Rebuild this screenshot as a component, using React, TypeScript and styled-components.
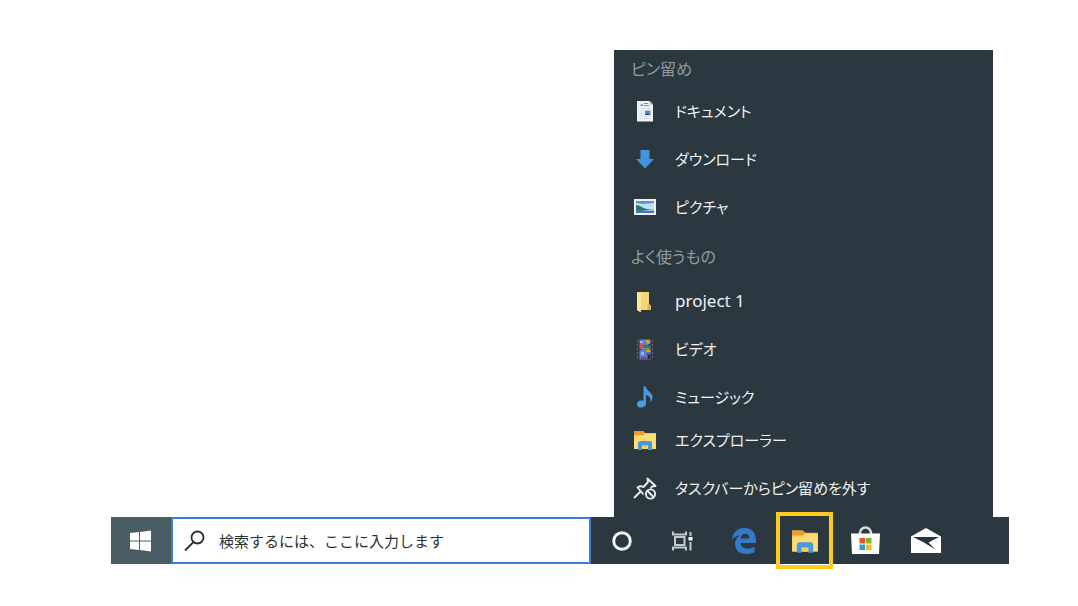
import React from 'react';
import styled, { createGlobalStyle } from 'styled-components';

const GlobalStyle = createGlobalStyle`
  * { box-sizing: border-box; }
  body {
    margin: 0;
    background: #fff;
    font-family: "Noto Sans", "Noto Sans CJK JP", sans-serif;
  }
  button, input { font: inherit; }
`;

const Desktop = styled.main`
  display: flex;
  flex-direction: column;
  padding: 50px 69px 40px 111px;
`;

const JumpList = styled.nav`
  align-self: flex-end;
  width: 379px;
  margin-right: 16px;
  padding: 7px 0 13px;
  background: #2b383f;
  font-feature-settings: "palt";
`;

const GroupTitle = styled.h2<{ $top?: number; $bottom: number }>`
  margin: ${p => p.$top ?? 0}px 0 ${p => p.$bottom}px 17px;
  font-size: 16px;
  font-weight: 400;
  line-height: 24px;
  color: #929ba0;
`;

const Group = styled.ul<{ $top?: number }>`
  display: flex;
  flex-direction: column;
  gap: 16px;
  margin: ${p => p.$top ?? 0}px 0 0;
  padding: 0;
  list-style: none;
`;

const Entry = styled.button<{ $latin?: boolean }>`
  display: flex;
  align-items: center;
  gap: 18px;
  width: 100%;
  height: 32px;
  padding: 0 0 0 19px;
  border: 0;
  background: transparent;
  color: #f0f2f3;
  font-size: ${p => (p.$latin ? 17 : 15)}px;
  font-feature-settings: "palt";
  line-height: 24px;
  text-align: left;
  white-space: nowrap;
  svg { flex: none; }
`;

const Taskbar = styled.footer`
  display: flex;
  height: 47px;
  background: #2b383f;
`;

const StartButton = styled.button`
  display: flex;
  align-items: center;
  justify-content: center;
  width: 60px;
  padding: 0;
  border: 0;
  background: #4b5d64;
`;

const SearchBox = styled.label`
  display: flex;
  flex: 1;
  align-items: center;
  gap: 12px;
  min-width: 0;
  padding-left: 11px;
  border: 2px solid #3c7ed0;
  background: #fff;
`;

const SearchInput = styled.input`
  flex: 1;
  min-width: 0;
  height: 32px;
  padding: 0;
  border: 0;
  outline: 0;
  background: transparent;
  font-size: 15px;
  color: #303030;
  &::placeholder { color: #303030; opacity: 1; }
`;

const Apps = styled.div`
  display: flex;
  padding-right: 52px;
`;

const AppButton = styled.button<{ $marked?: boolean }>`
  position: relative;
  display: flex;
  align-items: center;
  justify-content: center;
  width: 61px;
  padding: 0;
  border: 0;
  background: transparent;
  &::after {
    content: "";
    display: ${p => (p.$marked ? 'block' : 'none')};
    position: absolute;
    inset: -5px 2px;
    border: 4px solid #fbcb22;
  }
`;

const Icon = ({ size = 24, children }: { size?: number; children: React.ReactNode }) => (
  <svg width={size} height={size} viewBox="0 0 24 24" fill="none" aria-hidden="true">{children}</svg>
);

const DocumentIcon = () => (
  <Icon>
    <path d="M4 2h12.500L20 5.500V22.500H4z" fill="#f0f2f4" />
    <path d="M16.500 2v3.500H20z" fill="#b9c2c8" />
    <path d="M7 7l2-3 1 3zM11 4h4v1h-4zM11 6h5v1h-5z" fill="#3f9be0" />
    <path d="M6 9.500h12M6 12h5M6 14.500h5M6 17h12M6 19.500h12" stroke="#d3dfe9" />
    <path d="M12 11.500h5.500v4.500H12z" fill="#5d8fc2" />
    <path d="M12 16l2-2 3.500 2z" fill="#334c66" />
  </Icon>
);

const DownloadIcon = () => (
  <Icon><path d="M7.500 3h9v9H21l-9 9.500L3 12h4.500z" fill="#4294e0" /></Icon>
);

const PictureIcon = () => (
  <Icon>
    <path d="M1 4h22v16H1z" fill="#f2f1ee" />
    <path d="M3 6h18v12H3z" fill="#c3e3f5" />
    <path d="M3 6h18v2c-6 0-10 2-18 0z" fill="#5b91d7" />
    <path d="M3 10c4 0 6 3 11 4l7 1H3z" fill="#38725c" />
    <path d="M3 15h18v3H3z" fill="#3f79b4" />
    <path d="M9 16l12-2v2z" fill="#8fc3df" />
  </Icon>
);

const FolderIcon = () => (
  <Icon>
    <path d="M4 3h12v12l2 2v4H8l-1 2-3-2z" fill="#f6d478" />
    <path d="M4 3l4 2v18l-4-2z" fill="#ffe69b" />
    <path d="M14.500 15h1.500l2 2v4h-3.500z" fill="#dfb14c" />
  </Icon>
);

const VideoIcon = () => (
  <Icon>
    <path d="M3 2h18v21H3z" fill="#36393d" />
    <path d="M4.500 3v19M19.500 3v19" stroke="#62686d" strokeWidth="1" strokeDasharray="2 2" />
    <path d="M6.500 2.500h11v9h-11zM6.500 13h11v9.500h-11z" fill="#5a80d8" />
    <path d="M12 3h4l1.500 3-3 1zM13 13h4.500v2H14z" fill="#d9a72b" />
    <path d="M7 7h4v3H7z" fill="#dc4a51" />
    <path d="M11 8h6.500v3.500H9z" fill="#288356" />
    <path d="M13 16h4v3h-3zM8 20h5v2.500H8z" fill="#a83a46" />
    <path d="M7 4h3v2H7zM8 15h3v3H8z" fill="#93b7ee" />
    <path d="M15 18h2.500v4H14zM15 8l2.500-2v3z" fill="#293044" />
    <path d="M8 12h9" stroke="#e5b834" />
  </Icon>
);

const MusicIcon = () => (
  <Icon>
    <ellipse cx="8.500" cy="19" rx="4.500" ry="3.500" fill="#459be4" transform="rotate(-12 8.500 19)" />
    <path d="M10.500 1.500h2.300c.4 4.500 6.700 5.500 6.700 10.500 0 2.500-1 4-2 5 .2-4-1-6-4.500-7v9h-2.500z" fill="#459be4" />
  </Icon>
);

const ExplorerIcon = ({ size }: { size?: number }) => (
  <Icon size={size}>
    <path d="M1 3h9l2 2h11v16H1z" fill="#f3c84d" />
    <path d="M1 3h9l2 2-2 2H1z" fill="#e7a12b" />
    <path d="M1 8h9l2-2h11v15H1z" fill="#ffdc74" />
    <path d="M5 22v-7.500L6.500 13h11l1.500 1.500V22h-4v-4.500H9V22z" fill="#4699df" />
    <path d="M10 18h4v3h-4z" fill="#f6cc58" />
  </Icon>
);

const UnpinIcon = () => (
  <Icon>
    <g stroke="#e8ebed" strokeWidth="1.900" strokeLinejoin="round">
      <path d="M1 22l7.500-7.500M10.500 18.500L4.500 11.500c2-1.500 4-1.500 6-.5l4.500-5-.5-3.500 8 7.500-3.500.5-1.500 2" />
      <circle cx="17.500" cy="18" r="4.600" />
      <path d="M14.500 15l6 6" />
    </g>
  </Icon>
);

const WindowsIcon = () => (
  <svg width="22" height="22" viewBox="0 0 22 22" aria-hidden="true">
    <path fill="#fff" d="M0 3l9-1v8.500H0zM10 1.900L21 .5v10H10zM0 11.500h9V20l-9-1zM10 11.500h11v10L10 20.100z" />
  </svg>
);

const SearchIcon = () => (
  <svg width="23" height="22" viewBox="0 0 23 22" fill="none" stroke="#303030" strokeWidth="1.800" aria-hidden="true">
    <circle cx="13.500" cy="7.500" r="6" /><path d="M9.500 12L1 20.500" />
  </svg>
);

const CortanaIcon = () => (
  <Icon><circle cx="12" cy="12" r="8.300" stroke="#f2f4f5" strokeWidth="2.900" /></Icon>
);

const TaskViewIcon = () => (
  <Icon>
    <g stroke="#c3c9cc" strokeWidth="2">
      <path d="M2 2.500v3h13v-3M4 8h9.500v8H4zM2 21.500v-3h13v3M19.500 3v4M19.500 13v8.500" />
    </g>
    <path d="M17.500 8h4v3.500h-4z" fill="#fff" />
  </Icon>
);

const EdgeIcon = () => (
  <svg width="26" height="28" viewBox="0 0 26 28" aria-hidden="true">
    <path fill="#3479cb" fillRule="evenodd" d="M1 12.500C1.800 5.500 6.500 1 13.500 1 21 1 25 6.500 25 13v3H9.500c.2 4 3.500 5.700 7 5.700 2.700 0 4.800-.7 7-2v5.500c-2.300 1.200-5 1.800-8 1.800C8.500 27 4 23 4 17c0-4 2-7 5.300-8.800C6 8.500 3.300 9.700 1 12.500zM9.700 11.500h8.800c0-3-1.500-4.800-4.200-4.800-2.600 0-4.200 2-4.600 4.800z" />
  </svg>
);

const StoreIcon = () => (
  <svg width="30" height="30" viewBox="0 0 30 30" aria-hidden="true">
    <path d="M9 8.500V7a5.500 5.500 0 0 1 11 0v1.500" fill="none" stroke="#d6dbde" strokeWidth="2.600" />
    <path d="M0 7.500h29l-1 20.500H1z" fill="#fff" />
    <path d="M8.500 12H14v5.500H8.500z" fill="#f04d2b" />
    <path d="M15 12h5.500v5.500H15z" fill="#7cb928" />
    <path d="M8.500 18.500H14V24H8.500z" fill="#259fe4" />
    <path d="M15 18.500h5.500V24H15z" fill="#fbb91c" />
  </svg>
);

const MailIcon = () => (
  <svg width="32" height="26" viewBox="0 0 32 26" aria-hidden="true">
    <path d="M0 8.500L15 0l15 8.500V25H0z" fill="#fff" />
    <path d="M2 9h26L17.500 14.500l7 7L12 14z" fill="#27343b" />
  </svg>
);

type Item = { name: string; icon: React.ReactNode; latin?: boolean };

const pinned: Item[] = [
  { name: 'ドキュメント', icon: <DocumentIcon /> },
  { name: 'ダウンロード', icon: <DownloadIcon /> },
  { name: 'ピクチャ', icon: <PictureIcon /> },
];
const frequent: Item[] = [
  { name: 'project 1', icon: <FolderIcon />, latin: true },
  { name: 'ビデオ', icon: <VideoIcon /> },
  { name: 'ミュージック', icon: <MusicIcon /> },
];
const tasks: Item[] = [
  { name: 'エクスプローラー', icon: <ExplorerIcon /> },
  { name: 'タスクバーからピン留めを外す', icon: <UnpinIcon /> },
];
const apps = [
  { name: 'Cortana', icon: <CortanaIcon /> },
  { name: 'タスク ビュー', icon: <TaskViewIcon /> },
  { name: 'Microsoft Edge', icon: <EdgeIcon /> },
  { name: 'エクスプローラー', icon: <ExplorerIcon size={28} />, marked: true },
  { name: 'Microsoft Store', icon: <StoreIcon /> },
  { name: 'メール', icon: <MailIcon /> },
];

const Entries = ({ items, top }: { items: Item[]; top?: number }) => (
  <Group $top={top}>
    {items.map(item => (
      <li key={item.name}>
        <Entry type="button" $latin={item.latin}>{item.icon}<span>{item.name}</span></Entry>
      </li>
    ))}
  </Group>
);

export default function App() {
  return (
    <>
      <GlobalStyle />
      <Desktop>
        <JumpList>
          <GroupTitle $bottom={14}>ピン留め</GroupTitle>
          <Entries items={pinned} />
          <GroupTitle $top={22} $bottom={16}>よく使うもの</GroupTitle>
          <Entries items={frequent} />
          <Entries items={tasks} top={11} />
        </JumpList>
        <Taskbar>
          <StartButton type="button" aria-label="スタート"><WindowsIcon /></StartButton>
          <SearchBox>
            <SearchIcon />
            <SearchInput type="text" aria-label="検索" placeholder="検索するには、ここに入力します" />
          </SearchBox>
          <Apps>
            {apps.map(app => (
              <AppButton key={app.name} type="button" aria-label={app.name} $marked={app.marked}>{app.icon}</AppButton>
            ))}
          </Apps>
        </Taskbar>
      </Desktop>
    </>
  );
}
